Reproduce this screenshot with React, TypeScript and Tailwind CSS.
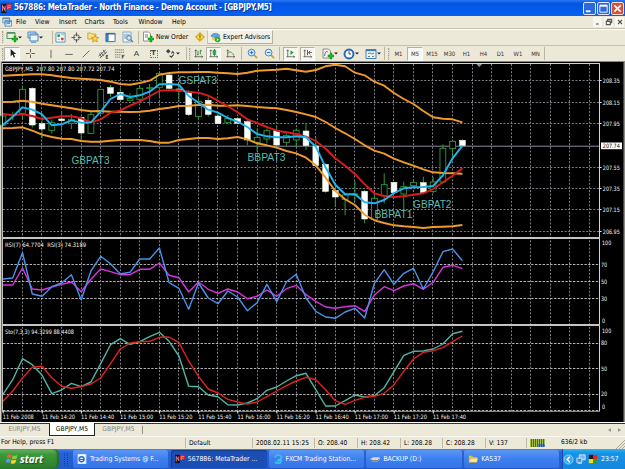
import { ReactNode } from "react";

const TOP = 60;
const SUB_TOP = 235;

// Candle and indicator levels are kept in thirds of a pixel below the pane origin
const upperBand = [47, 46, 44, 43, 43, 46, 50, 54, 56, 58, 60, 65, 72, 74, 69, 62, 44, 39, 37, 37, 36, 36, 38, 40, 42, 38, 32, 31, 29, 26, 31, 35, 30, 19, 14, 19, 38, 46, 65, 77, 99, 117, 132, 153, 172, 176, 178, 187];
const middleBand = [126, 125, 122, 125, 131, 136, 140, 145, 150, 154, 153, 155, 155, 156, 155, 152, 147, 143, 138, 137, 135, 134, 137, 137, 136, 138, 141, 143, 145, 150, 156, 163, 171, 186, 204, 220, 237, 256, 272, 281, 296, 307, 317, 328, 337, 339, 340, 341];
const lowerBand = [205, 204, 202, 212, 224, 231, 236, 237, 243, 245, 245, 242, 240, 240, 240, 243, 248, 248, 240, 237, 234, 234, 237, 235, 231, 238, 250, 256, 263, 273, 280, 293, 316, 353, 393, 418, 435, 464, 481, 489, 496, 499, 501, 504, 501, 500, 499, 495];
const fastMa = [195, 170, 142, 149, 163, 196, 193, 181, 188, 187, 155, 117, 102, 111, 106, 95, 73, 72, 74, 108, 128, 149, 158, 174, 185, 201, 222, 229, 232, 232, 229, 232, 260, 322, 374, 403, 403, 427, 430, 420, 399, 385, 382, 381, 378, 346, 295, 257];
const slowMa = [162, 166, 163, 168, 177, 173, 169, 169, 175, 187, 178, 158, 151, 137, 124, 109, 92, 91, 91, 95, 98, 107, 122, 139, 157, 178, 189, 201, 212, 217, 222, 230, 243, 266, 295, 317, 342, 373, 400, 408, 411, 409, 404, 400, 387, 367, 347, 325];
const rsi3 = [132, 129, 53, 177, 184, 155, 144, 119, 195, 108, 64, 86, 117, 112, 72, 72, 39, 143, 160, 223, 144, 189, 206, 168, 186, 227, 203, 148, 200, 140, 118, 189, 229, 246, 250, 231, 220, 249, 145, 104, 148, 115, 100, 162, 111, 50, 42, 77];
const rsi7 = [150, 150, 99, 162, 165, 156, 148, 141, 170, 133, 102, 110, 119, 119, 103, 103, 84, 121, 128, 171, 141, 163, 175, 162, 171, 191, 184, 165, 184, 161, 151, 179, 199, 216, 220, 215, 212, 229, 180, 155, 167, 153, 146, 163, 142, 97, 91, 101];
const stoMain = [478, 434, 371, 389, 421, 476, 465, 445, 455, 441, 386, 329, 311, 328, 320, 305, 292, 319, 363, 454, 455, 480, 485, 509, 510, 504, 491, 466, 456, 438, 422, 415, 464, 513, 513, 497, 480, 486, 482, 458, 410, 361, 349, 348, 342, 327, 296, 289];
const stoSignal = [499, 468, 429, 397, 394, 428, 454, 460, 455, 447, 429, 386, 342, 324, 320, 319, 307, 306, 323, 378, 424, 462, 474, 493, 501, 507, 501, 485, 468, 452, 438, 427, 434, 464, 497, 508, 496, 487, 484, 475, 449, 409, 372, 352, 347, 338, 320, 303];

// high, body top, body bottom, low, bearish
const candles: [number, number, number, number, number][] = [
  [168, 168, 195, 195, 0], [155, 165, 167, 180, 0], [78, 88, 160, 175, 0], [82, 85, 195, 203, 1],
  [168, 191, 207, 235, 1], [180, 188, 211, 221, 0], [154, 177, 182, 215, 1], [162, 178, 190, 207, 0],
  [170, 172, 219, 240, 1], [155, 164, 220, 222, 0], [87, 88, 160, 162, 0], [75, 83, 100, 110, 1],
  [83, 97, 119, 122, 1], [100, 115, 121, 122, 0], [75, 85, 118, 130, 0], [72, 83, 85, 137, 0],
  [38, 40, 83, 115, 0], [40, 45, 85, 88, 1], [76, 87, 93, 125, 1], [90, 98, 164, 168, 1],
  [115, 124, 170, 180, 0], [110, 121, 163, 170, 1], [160, 168, 191, 192, 1], [165, 176, 188, 190, 0],
  [172, 176, 190, 192, 1], [178, 185, 240, 256, 1], [205, 232, 247, 275, 0], [205, 212, 237, 250, 0],
  [198, 212, 255, 265, 1], [220, 226, 247, 257, 0], [205, 211, 240, 262, 0], [188, 213, 257, 270, 1],
  [232, 258, 317, 318, 1], [310, 313, 394, 398, 1], [385, 392, 411, 441, 1], [400, 405, 418, 466, 0],
  [363, 402, 405, 425, 0], [390, 394, 477, 490, 1], [405, 415, 478, 480, 0], [340, 374, 408, 430, 0],
  [365, 367, 398, 402, 1], [365, 380, 402, 452, 0], [358, 367, 377, 382, 0], [350, 368, 398, 402, 1],
  [350, 366, 394, 400, 0], [253, 265, 366, 370, 0], [240, 244, 266, 300, 0], [238, 241, 257, 262, 1],
];

const barX = (i: number) => 2.95 + i * 9.776;
const toPoints = (values: number[], top: number) =>
  values.map((v, i) => `${barX(i).toFixed(1)},${(top + v / 3).toFixed(1)}`).join(" ");

const gridX = Array.from({ length: 30 }, (_, i) => Math.floor(22.4 + i * 19.55) + 0.5);
const priceLevels: [number, string][] = [
  [80.5, "208.35"], [102.5, "208.15"], [123.5, "207.95"], [167.5, "207.55"],
  [188.5, "207.35"], [209.5, "207.15"], [231.5, "206.95"],
];
const subLevels = [264.5, 281.5, 298.5, 343.5, 368.5, 394.5];
const subLabels: [number, number, string][] = [
  [602, 245.2, "100"], [601, 266.5, "70"], [601, 283.7, "50"], [601, 300.8, "30"], [602, 322.6, "0"],
  [602, 332.5, "100"], [601, 345.4, "80"], [601, 370.6, "50"], [601, 396, "20"], [602, 409.2, "0"],
];
const times = ["2008", "14:20", "14:40", "15:00", "15:20", "15:40", "16:00", "16:20", "16:40", "17:00", "17:20", "17:40"];
const notes: [number, number, number, string][] = [
  [71.5, 163.7, 38, "GBPAT3"], [178.5, 84.4, 38.5, "GSPAT3"], [247.5, 161.1, 38, "BBPAT3"],
  [374.5, 218.4, 38, "BBPAT1"], [413, 208.1, 38.5, "GBPAT2"],
];

function Chart() {
  return (
    <svg
      width="625"
      height="361"
      viewBox="0 61 625 361"
      className="block shrink-0 bg-black font-['DejaVu_Sans_Condensed','Noto_Sans',sans-serif]"
    >
      <rect x="0" y="61" width="625" height="1" fill="#8b8a80" />
      <rect x="0" y="61" width="1.5" height="361" fill="#d8d5c8" />
      <rect x="623.5" y="61" width="1.5" height="361" fill="#8b8a80" />

      <g stroke="#7c7c86" strokeWidth="1" strokeDasharray="2 1.6">
        {gridX.map((x) => (
          <line key={x} x1={x} x2={x} y1="64" y2="411" />
        ))}
        {priceLevels.map(([y]) => (
          <line key={y} x1="3" x2="599" y1={y} y2={y} />
        ))}
      </g>
      <g stroke="#b4b4b4" strokeWidth="1" strokeDasharray="2.4 1.4">
        {subLevels.map((y) => (
          <line key={y} x1="3" x2="599" y1={y} y2={y} />
        ))}
        <line x1="3" x2="599" y1="410.5" y2="410.5" />
      </g>
      <line x1="3" x2="599" y1="146.2" y2="146.2" stroke="#8d8ba0" />

      {candles.map(([high, top, bottom, low, bearish], i) => {
        const x = barX(i);
        return (
          <g key={i} stroke="#2f9a35" strokeWidth="1">
            <line x1={x} x2={x} y1={TOP + high / 3} y2={TOP + low / 3} />
            <rect
              x={x - 2.9}
              y={TOP + top / 3}
              width="5.8"
              height={(bottom - top) / 3}
              fill={bearish ? "#fff" : "#000"}
              stroke={bearish ? "#e4f7df" : "#2f9a35"}
              strokeWidth={bearish ? 0.6 : 0.9}
            />
          </g>
        );
      })}

      <g fill="none" strokeWidth="1.9" strokeLinejoin="round">
        <polyline points={toPoints(upperBand, TOP)} stroke="#f09a2c" />
        <polyline points={toPoints(middleBand, TOP)} stroke="#f09a2c" />
        <polyline points={toPoints(lowerBand, TOP)} stroke="#f09a2c" />
        <polyline points={toPoints(slowMa, TOP)} stroke="#d81c1c" />
        <polyline points={toPoints(fastMa, TOP)} stroke="#22b4ec" />
      </g>
      <g fill="none" strokeWidth="1.4" strokeLinejoin="round">
        <polyline points={toPoints(rsi7, SUB_TOP)} stroke="#d934dc" />
        <polyline points={toPoints(rsi3, SUB_TOP)} stroke="#4a92ea" />
        <polyline points={toPoints(stoMain, SUB_TOP)} stroke="#50b5a4" />
        <polyline points={toPoints(stoSignal, SUB_TOP)} stroke="#de2420" />
      </g>

      <g fill="#d5d5d5">
        <rect x="2" y="63" width="598" height="1" />
        <rect x="2" y="63" width="0.9" height="348" />
        <rect x="599" y="63" width="1" height="348" />
        <rect x="2" y="411" width="598" height="0.6" />
      </g>
      <g fill="#c4c4c4">
        <rect x="2" y="237" width="598" height="2" />
        <rect x="2" y="324" width="598" height="2" />
      </g>
      <path d="M476.3 64h6l-3 3z" fill="#8c8fa0" />

      <g fill="#5cbcb0" fontSize="10.2" className="font-['Liberation_Sans',Arial,sans-serif]">
        {notes.map(([x, y, w, text]) => (
          <text key={text} x={x} y={y} textLength={w} lengthAdjust="spacingAndGlyphs">{text}</text>
        ))}
      </g>

      <g fill="#f2f2f2" fontSize="6">
        <text x="5" y="71.2" textLength="109.5" lengthAdjust="spacingAndGlyphs">GBPJPY,M5&#160; 207.80 207.80 207.72 207.74</text>
        <text x="5" y="246.8" textLength="81" lengthAdjust="spacingAndGlyphs">RSI(7) 64.7704&#160; RSI(3) 74.3189</text>
        <text x="5" y="334" textLength="69" lengthAdjust="spacingAndGlyphs">Sto(7,3,3) 94.3299 88.4408</text>
        {priceLevels.map(([y, label]) => (
          <g key={label}>
            <rect x="600" y={y - 0.5} width="1.5" height="1" />
            <text x="602.8" y={y + 2.2} textLength="17" lengthAdjust="spacingAndGlyphs">{label}</text>
          </g>
        ))}
        {subLabels.map(([x, y, label]) => (
          <text key={y} x={x} y={y} textLength={label.length * 3.1} lengthAdjust="spacingAndGlyphs">{label}</text>
        ))}
        {times.map((t, i) => (
          <g key={t}>
            <rect x={barX(i * 4) - 0.3} y="411" width="1" height="2.5" />
            <text x={2.8 + i * 39.1} y="418.9" textLength={i ? 33.2 : 31} lengthAdjust="spacingAndGlyphs">11 Feb {t}</text>
          </g>
        ))}
      </g>
      <rect x="601" y="142.5" width="21" height="6.7" fill="#fff" />
      <text x="602.8" y="148" fontSize="6" fill="#000" textLength="17" lengthAdjust="spacingAndGlyphs">207.74</text>
    </svg>
  );
}

function Icon({ children, size = 12 }: { children: ReactNode; size?: number }) {
  return (
    <svg width={size} height={size} viewBox="0 0 12 12" fill="none" className="shrink-0">
      {children}
    </svg>
  );
}

function Cell({ w, pressed, children }: { w: string; pressed?: boolean; children?: ReactNode }) {
  return (
    <div
      className={`flex h-[14px] shrink-0 items-center justify-center ${w} ${
        pressed ? "border border-[#b5b2a2] border-r-white border-b-white bg-[#f8f7f1]" : ""
      }`}
    >
      {children}
    </div>
  );
}

const Sep = () => <div className="h-[13px] w-px shrink-0 bg-[#b9b6a5]" />;
const Grip = () => <div className="h-[12px] w-[2px] shrink-0 border-l border-dotted border-[#a5a293] bg-[#dedbca]" />;
const Arrow = () => (
  <svg width="4" height="3" viewBox="0 0 4 3" className="shrink-0">
    <path d="M0 .4h4L2 2.6z" fill="#222" />
  </svg>
);
const plus = <path d="M6 7h2V5h2v2h2v2h-2v2H8V9H6z" fill="#18b91c" stroke="#08800d" strokeWidth=".4" />;
const axes = <path d="M3 2v8M1.5 9.5h9M2 3.5l1-1.5 1 1.5M9.3 8.5l1.4 1-1.4 1" stroke="#4b4b48" strokeWidth=".8" />;

function MenuBar() {
  return (
    <div className="flex h-[12px] shrink-0 items-center bg-[#ece9d8] text-[6.8px] leading-none text-black">
      <div className="flex w-[16px] shrink-0 pl-[2px]">
        <Icon size={10}>
          <path d="M1 1h8v6H1zM3.5 4h8v7h-8z" fill="#e2f0fb" stroke="#4d86bd" />
          <path d="M1 2h8M3.5 5.2h8" stroke="#4d86bd" strokeWidth="1.2" />
          <path d="M5 9l2-2 1.5 1.3L10 7" stroke="#3b75aa" />
        </Icon>
      </div>
      <span className="w-[19px]">File</span>
      <span className="w-[24px]">View</span>
      <span className="w-[25.5px]">Insert</span>
      <span className="w-[28.5px]">Charts</span>
      <span className="w-[25.5px]">Tools</span>
      <span className="w-[33.5px]">Window</span>
      <span>Help</span>
      <div className="ml-auto flex gap-[2px] pr-[1px]">
        {["M3 9h4", "M4 4V2h6v5H8M2 4.5h6V10H2zM2 5h6", "M3 3l6 6M9 3l-6 6"].map((d) => (
          <div key={d} className="flex h-[10px] w-[9px] items-center justify-center bg-[#f7f6f0]">
            <Icon size={8}><path d={d} stroke="#56564f" strokeWidth="1.7" /></Icon>
          </div>
        ))}
      </div>
    </div>
  );
}

function StandardToolbar() {
  return (
    <div className="flex h-[17px] shrink-0 items-center border-t border-[#c5c2b2] bg-[#ece9d8] pl-[2px] text-[6.8px] leading-none text-black shadow-[inset_0_1px_0_#fff]">
      <Grip />
      <Cell w="w-[20px]">
        <Icon><path d="M1 1.5h8v6H1z" fill="#dff1dc" stroke="#568b63" /><path d="M1 2.3h8" stroke="#4f9674" />{plus}</Icon>
        <Arrow />
      </Cell>
      <Cell w="w-[22px]">
        <Icon><path d="M1 1h8v6H1z" fill="#cfe5f8" stroke="#4d86bd" /><path d="M3 3h8v7H3z" fill="#eaf4fc" stroke="#4d86bd" /><path d="M3 4h8M4 11.3h5" stroke="#5792c8" /></Icon>
        <Arrow />
      </Cell>
      <div className="w-[6px]" />
      <Sep />
      <Cell w="w-[14px]">
        <Icon size={11}><path d="M1 1h10v10H1z" fill="#f4fafc" stroke="#5793b9" /><circle cx="4" cy="4" r="1.6" fill="#2ea043" /><circle cx="8" cy="7.6" r="1.6" fill="#d5443a" /><path d="M7 3h3M3 8h2" stroke="#6aabc7" /></Icon>
      </Cell>
      <Cell w="w-[18px]">
        <Icon size={11}><circle cx="6" cy="6" r="3" stroke="#77766c" strokeWidth="1.1" /><path d="M6 .5v4M6 7.5v4M.5 6h4M7.5 6h4" stroke="#5c5b54" strokeWidth="1.2" /></Icon>
      </Cell>
      <Cell w="w-[16px]">
        <Icon><path d="M.8 2h3l1 1h4v5h-8z" fill="#fbe186" stroke="#c39a2f" strokeWidth=".8" /><path d="M8 4l1.1 2.4 2.6.3-1.9 1.7.5 2.6L8 9.7 5.7 11l.5-2.6-1.9-1.7 2.6-.3z" fill="#ffd83a" stroke="#b88a1e" strokeWidth=".7" /></Icon>
      </Cell>
      <Cell w="w-[18px]">
        <Icon size={11}><path d="M1 1.5h10v9H1z" fill="#fff" stroke="#2e63b0" /><path d="M1 1.5h3v9H1z" fill="#3f79c8" /><path d="M1 2h10" stroke="#2e63b0" strokeWidth="1.4" /></Icon>
      </Cell>
      <Cell w="w-[17px]">
        <Icon><path d="M1 1h8v10H1z" fill="#edf5fb" stroke="#7ea8c9" /><path d="M3 3v5M5 2.5v4M7 3v2" stroke="#6f98bd" /><circle cx="7" cy="7" r="2.3" fill="#d5ebf8" stroke="#53779c" /><path d="M9 9l2 2" stroke="#53779c" strokeWidth="1.3" /></Icon>
      </Cell>
      <div className="w-[2px]" />
      <Sep />
      <div className="flex w-[56px] items-center gap-[2px] pl-[3px]">
        <Icon><path d="M1.5 1h5l2 2v7h-7z" fill="#fff" stroke="#777" strokeWidth=".8" /><path d="M3 4h3M3 6h3" stroke="#555" strokeWidth=".8" />{plus}</Icon>
        <span className="tracking-[-0.04px] whitespace-nowrap">New Order</span>
      </div>
      <Cell w="w-[9px]">
        <Icon size={10}><path d="M6 .7L11.3 6 6 11.3.7 6z" fill="#f8cf37" stroke="#b08a17" /><path d="M6 3v3.8M6 8v1.3" stroke="#7e6111" strokeWidth="1.3" /></Icon>
      </Cell>
      <div className="w-[3px]" />
      <div className="flex h-[14px] w-[66px] items-center gap-[2px] border border-[#b5b2a2] border-t-white border-l-[#c9c6b6] bg-[#f3f1e7] pl-[2px]">
        <Icon size={11}><path d="M1 4.5C2 1 9 0 11 4.5L6 7z" fill="#57a9dc" stroke="#3f80aa" strokeWidth=".6" /><path d="M2 5l4 2 4-2v3L6 10 2 8z" fill="#eccb58" /><circle cx="8.3" cy="8.3" r="3" fill="#27aa34" /><path d="M7.4 6.8v3l2.400-1.500z" fill="#fff" /></Icon>
        <span className="tracking-[-0.04px] whitespace-nowrap">Expert Advisors</span>
      </div>
    </div>
  );
}

function ChartToolbar() {
  return (
    <div className="flex h-[16px] shrink-0 items-center border-t border-[#c5c2b2] bg-[#ece9d8] pl-[2px] text-[6px] leading-none text-[#333]">
      <Grip />
      <Cell w="w-[16px]" pressed>
        <Icon size={11}><path d="M4 1v8l2-2 1.500 3.500 1.300-.6L7.300 6.500H10z" fill="#222" /></Icon>
      </Cell>
      <Cell w="w-[20px]">
        <Icon size={11}><path d="M6 1v4M6 7v4M1 6h4M7 6h4" stroke="#66645c" strokeWidth="1.100" /></Icon>
      </Cell>
      <Cell w="w-[22px]"><Icon size={10}><path d="M6 1v10" stroke="#55534c" /></Icon></Cell>
      <Cell w="w-[14px]"><Icon size={10}><path d="M1.500 6.500h9" stroke="#55534c" /></Icon></Cell>
      <Cell w="w-[19px]"><Icon size={10}><path d="M2 10l8-8" stroke="#55534c" /></Icon></Cell>
      <Cell w="w-[16px]">
        <Icon size={11}><path d="M.5 9l8-7M2 11l8-7M3 4.500l3 4M5.500 2l3 4.500M1.500 6l2.500 4" stroke="#4e4c46" strokeWidth=".9" /><path d="M11 8H9v3.500h2M9 9.700h2" stroke="#222" strokeWidth=".8" /></Icon>
      </Cell>
      <Cell w="w-[17px]">
        <Icon size={11}><path d="M1 2h10M1 4.700h10M1 7.400h7M1 10h6" stroke="#77756b" strokeDasharray="1.500 .6" /><path d="M9 11.500V8h2.500M9 9.600h2" stroke="#222" strokeWidth=".8" /></Icon>
      </Cell>
      <Cell w="w-[17px]"><span className="font-['Liberation_Sans'] text-[8px] text-[#444]">A</span></Cell>
      <Cell w="w-[17px]">
        <div className="flex size-[8px] items-center justify-center border border-dotted border-[#77756b] text-[6.5px] font-bold">T</div>
      </Cell>
      <Cell w="w-[20px]">
        <Icon size={11}><path d="M1 3.500L3.500 1 6 3.500 3.500 6z" fill="#444" /><path d="M7 6l1.500-2L10 6M5 8.500l2 1.500 2.500-3" stroke="#444" strokeWidth="1.200" /></Icon>
        <Arrow />
      </Cell>
      <div className="w-[4px]" />
      <Sep />
      <div className="w-[2px]" />
      <Grip />
      <Cell w="w-[15px]">
        <Icon size={11}>{axes}<path d="M5.500 3v5M4.500 7h1M8 2v5M8 3h1.500" stroke="#278c35" /></Icon>
      </Cell>
      <Cell w="w-[15px]" pressed>
        <Icon size={11}>{axes}<path d="M7 1v8" stroke="#168923" /><path d="M5.500 2.500h3V7h-3z" fill="#22b735" stroke="#168923" strokeWidth=".6" /></Icon>
      </Cell>
      <Cell w="w-[18px]">
        <Icon size={11}>{axes}<path d="M3 6c3-4 4 0 7 1.500" stroke="#339847" /></Icon>
      </Cell>
      <div className="w-[2px]" />
      <Sep />
      <Cell w="w-[20px]">
        <Icon size={11}><path d="M7.500 7.500L11 11" stroke="#d0a32d" strokeWidth="2" /><circle cx="5" cy="5" r="3.700" fill="#d9effc" stroke="#367dbd" /><path d="M3 5h4M5 3v4" stroke="#2067b0" /></Icon>
      </Cell>
      <Cell w="w-[14px]">
        <Icon size={11}><path d="M7.500 7.500L11 11" stroke="#d0a32d" strokeWidth="2" /><circle cx="5" cy="5" r="3.700" fill="#d9effc" stroke="#367dbd" /><path d="M3 5h4" stroke="#2067b0" /></Icon>
      </Cell>
      <div className="w-[3px]" />
      <Sep />
      <div className="w-[3px]" />
      <Cell w="w-[15px]" pressed>
        <Icon size={11}>{axes}<path d="M6 2.500v5l3.500-2.500z" fill="#20a431" /></Icon>
      </Cell>
      <div className="w-[2px]" />
      <Cell w="w-[15px]" pressed>
        <Icon size={11}>{axes}<path d="M6 2v6M7 5h4M9 3L7 5l2 2" stroke="#6b4a41" /></Icon>
      </Cell>
      <div className="w-[6px]" />
      <Cell w="w-[17px]">
        <Icon><path d="M1 1h5.500l2 2v7H1z" fill="#eee" stroke="#777" strokeWidth=".8" /><path d="M2.500 8c1-5 2-5 3.500-4" stroke="#555" strokeWidth=".8" />{plus}</Icon>
        <Arrow />
      </Cell>
      <div className="w-[4px]" />
      <Cell w="w-[17px]">
        <Icon><circle cx="6" cy="6" r="4.500" fill="#f7fbff" stroke="#1f66b8" strokeWidth="1.900" /><path d="M6 3.200V6h2" stroke="#333" strokeWidth=".9" /></Icon>
        <Arrow />
      </Cell>
      <div className="w-[5px]" />
      <Cell w="w-[17px]">
        <Icon><path d="M1 1.500h10v9H1z" fill="#e8f2f8" stroke="#4480b2" /><path d="M1 2.300h10" stroke="#4480b2" strokeWidth="1.700" /><path d="M3 5.500l2-.5 2 1 2-1M3 8.500h2M7 8.500h2" stroke="#466" strokeWidth=".8" /></Icon>
        <Arrow />
      </Cell>
      <div className="w-[3px]" />
      <Sep />
      <div className="w-[3px]" />
      <Grip />
      <Cell w="w-[17px]">M1</Cell>
      <Cell w="w-[16px]" pressed>M5</Cell>
      <Cell w="w-[18px]">M15</Cell>
      <Cell w="w-[17px]">M30</Cell>
      <Cell w="w-[17px]">H1</Cell>
      <Cell w="w-[17px]">H4</Cell>
      <Cell w="w-[17px]">D1</Cell>
      <Cell w="w-[18px]">W1</Cell>
      <Cell w="w-[17px]">MN</Cell>
      <Sep />
    </div>
  );
}

function StatusBar() {
  const field = "h-[10px] shrink-0 border-l border-[#bdbaa9] pl-[3px] leading-[10px]";
  return (
    <div className="flex h-[13px] shrink-0 items-center border-t border-[#f8f7f1] bg-[#ece9d8] pl-px text-[6.6px] whitespace-nowrap text-black">
      <span className="w-[184px]">For Help, press F1</span>
      <span className={`w-[67px] ${field}`}>Default</span>
      <span className={`w-[62px] ${field}`}>2008.02.11 15:25</span>
      <span className={`w-[43px] ${field}`}>O: 208.40</span>
      <span className={`w-[43px] ${field}`}>H: 208.42</span>
      <span className={`w-[42px] ${field}`}>L: 208.28</span>
      <span className={`w-[43px] ${field}`}>C: 208.28</span>
      <span className={`w-[41px] ${field}`}>V: 137</span>
      <div className="flex h-[10px] w-[35px] items-center border-l border-[#bdbaa9] pl-[3px]">
        <svg width="15" height="8" viewBox="0 0 15 8">
          <path d="M0 0h15v5H8v3H0z" fill="#a3bd48" />
          <path d="M8 5h7v3H8z" fill="#5d8bb4" />
          <path d="M1.500 0v8M3.500 0v8M5.500 0v8M7.500 0v8M9.500 0v8M11.500 0v8M13.500 0v8" stroke="#25422d" strokeWidth=".7" />
        </svg>
      </div>
      <span>636/2 kb</span>
      <svg width="9" height="9" viewBox="0 0 9 9" className="ml-auto self-end">
        <path d="M0 9l9-9M3 9l6-6M6 9l3-3" stroke="#aaa797" />
      </svg>
    </div>
  );
}

function Task({ icon, label, active }: { icon: ReactNode; label: string; active?: boolean }) {
  return (
    <div
      className={`mr-[1.5px] flex h-[18px] w-[96.3px] shrink-0 items-center gap-[3px] rounded-[2px] pl-[4px] ${
        active
          ? "bg-[#1c4fb5] shadow-[inset_1px_1px_1px_#123a8c]"
          : "bg-linear-to-b from-[#5a97f5] via-[#3c7ff0] to-[#3474e6] shadow-[inset_-1px_0_0_#2a5fca]"
      }`}
    >
      {icon}
      <span className="whitespace-nowrap">{label}</span>
    </div>
  );
}

const logo = (
  <>
    <path d="M0 1h6v10H0z" fill="#16161c" />
    <path d="M6 1h6v6H6z" fill="#d21d33" />
    <path d="M1.500 9V3l3 5V3M7.500 7V3H11M7.500 5h3" stroke="#e9848b" strokeWidth="1.100" />
  </>
);

function Taskbar() {
  return (
    <div className="flex h-[20px] shrink-0 items-center bg-linear-to-b from-[#3f86f2] via-[#2663dd] via-15% to-[#2258cc] text-[6.8px] leading-none text-white">
      <div className="flex h-[20px] w-[59px] items-center gap-[2px] rounded-r-[5px] bg-linear-to-b from-[#6bb367] via-[#3c9a3b] via-25% to-[#2c7c2c] pl-[6px] shadow-[inset_-2px_0_2px_#256b2b]">
        <Icon>
          <path d="M1.500 2Q4 .5 6 2L5 5.500Q3 4 .7 5.500z" fill="#e8642c" />
          <path d="M6.800 2.300Q9 3.500 11.500 2l-1 3.600Q8 7 5.900 5.700z" fill="#8fcb3c" />
          <path d="M.5 6.300Q3 5 4.800 6.300L3.800 10Q1.800 8.700-.4 10z" fill="#5a96ee" />
          <path d="M5.600 6.700Q8 8 10.300 6.500l-1 3.600Q7 11.500 4.700 10.200z" fill="#f8ce35" />
        </Icon>
        <span className="font-['Open_Sans',sans-serif] text-[10px] font-bold italic [text-shadow:1px_1px_1px_#1c4d1f]">start</span>
      </div>
      <div className="mx-[5px] flex gap-[2px]">
        <div className="h-[13px] border-l border-dotted border-[#153f9c]" />
        <div className="h-[13px] border-l border-dotted border-[#153f9c]" />
      </div>
      <Task
        label="Trading Systems @ F..."
        icon={<Icon size={10}><path d="M1 0h10v12H1z" fill="#f7fbff" stroke="#9ab8dc" strokeWidth=".7" /><circle cx="5.500" cy="6.300" r="3" stroke="#226dcc" strokeWidth="1.600" /><path d="M3 6.500h6" stroke="#226dcc" strokeWidth="1.300" /></Icon>}
      />
      <Task active label="567886: MetaTrader ..." icon={<Icon size={10}>{logo}</Icon>} />
      <Task
        label="FXCM Trading Station..."
        icon={<Icon size={10}><path d="M2 4Q6-1 10 3 11 6 5 8h6M2 10q4 2 8 0" stroke="#3ac4ea" strokeWidth="2" /></Icon>}
      />
      <Task
        label="BACKUP (D:)"
        icon={<Icon size={10}><path d="M0 6l4-2h7l1 2-3 3H3z" fill="#d9d9d3" /><path d="M1 7l3 1h5l2-2" stroke="#55585c" /></Icon>}
      />
      <Task
        label="KAS37"
        icon={<Icon size={10}><path d="M1 2h4l1 1.500h5V10H1z" fill="#e8b93d" /><path d="M1 10l2-5h9l-1.500 5z" fill="#ffe88d" stroke="#c29631" strokeWidth=".5" /></Icon>}
      />
      <div className="ml-auto flex h-[20px] w-[63px] items-center gap-[2px] border-l border-[#1750a8] bg-linear-to-b from-[#2fb3f4] via-[#1594e8] via-20% to-[#1286dc]">
        <Icon size={11}><circle cx="6" cy="6" r="5" fill="#3ba5f2" stroke="#b9e0fb" strokeWidth=".8" /><path d="M7.500 3L4.500 6l3 3" stroke="#fff" strokeWidth="1.700" /></Icon>
        <Icon size={10}><path d="M4 1h7v6H4z" fill="#76b4ed" stroke="#e1eefa" /><path d="M1 5h6v5H1z" fill="#4a86c8" stroke="#e1eefa" /><path d="M2 11.500h5" stroke="#ddd" /></Icon>
        <Icon size={10}><path d="M1 1h5v5H1z" fill="#1b1b1b" /><path d="M6 1h5v5H6z" fill="#e9261e" /><path d="M1 6h5v5H1z" fill="#f5da25" /><path d="M6 6h5v5H6z" fill="#2a9d35" /></Icon>
        <span className="ml-[1px]">23:57</span>
      </div>
    </div>
  );
}

export default function App() {
  return (
    <div className="flex h-[469px] w-[625px] flex-col overflow-hidden bg-[#ece9d8] font-['DejaVu_Sans_Condensed','Noto_Sans',sans-serif]">
      <div className="flex h-[16px] shrink-0 items-center bg-linear-to-b from-[#2a7af4] via-[#0455e2] via-20% to-[#0661f6] pl-px">
        <Icon size={11}>{logo}</Icon>
        <span className="ml-[2px] text-[8px] leading-none font-bold tracking-[-0.22px] whitespace-nowrap text-white [text-shadow:1px_1px_0_#0c348c]">
          567886: MetaTrader - North Finance - Demo Account - [GBPJPY,M5]
        </span>
        <div className="ml-auto flex gap-[1px] pr-[1px]">
          <div className="flex size-[13px] items-center justify-center rounded-[2px] border border-[#dce8fc] bg-[#2e66e2]">
            <Icon size={11}><path d="M2 9h5" stroke="#fff" strokeWidth="2" /></Icon>
          </div>
          <div className="flex size-[13px] items-center justify-center rounded-[2px] border border-[#dce8fc] bg-[#2e66e2]">
            <Icon size={11}><path d="M2 2.500h8V10H2z" stroke="#fff" /><path d="M2 3h8" stroke="#fff" strokeWidth="2" /></Icon>
          </div>
          <div className="flex size-[13px] items-center justify-center rounded-[2px] border border-[#f5dcd5] bg-[#dc4f2c]">
            <Icon size={11}><path d="M2.500 2.500l7 7M9.500 2.500l-7 7" stroke="#fff" strokeWidth="1.800" /></Icon>
          </div>
        </div>
      </div>
      <MenuBar />
      <StandardToolbar />
      <ChartToolbar />
      <Chart />
      <div className="flex h-[14px] shrink-0 items-start border-t border-white bg-[#ece9d8] text-[6.7px] leading-none text-[#85837a]">
        <div className="flex h-[12px] w-[49px] items-center justify-center border-t border-[#33332e]">EURJPY,M5</div>
        <div className="flex h-[13px] w-[46px] items-center justify-center border border-t-0 border-[#222] bg-white text-black">GBPJPY,M5</div>
        <div className="flex h-[12px] w-[47px] items-center justify-center border-t border-[#33332e]">GBPJPY,M5</div>
        <div className="flex h-[12px] flex-1 items-center justify-end gap-[7px] border-t border-[#33332e] pr-[4px]">
          <div className="mr-auto h-[8px] w-px bg-[#96948a]" />
          <svg width="3" height="4" viewBox="0 0 3 4"><path d="M3 0v4L0 2z" fill="#99978c" /></svg>
          <svg width="3" height="4" viewBox="0 0 3 4"><path d="M0 0v4l3-2z" fill="#99978c" /></svg>
        </div>
      </div>
      <StatusBar />
      <Taskbar />
    </div>
  );
}
